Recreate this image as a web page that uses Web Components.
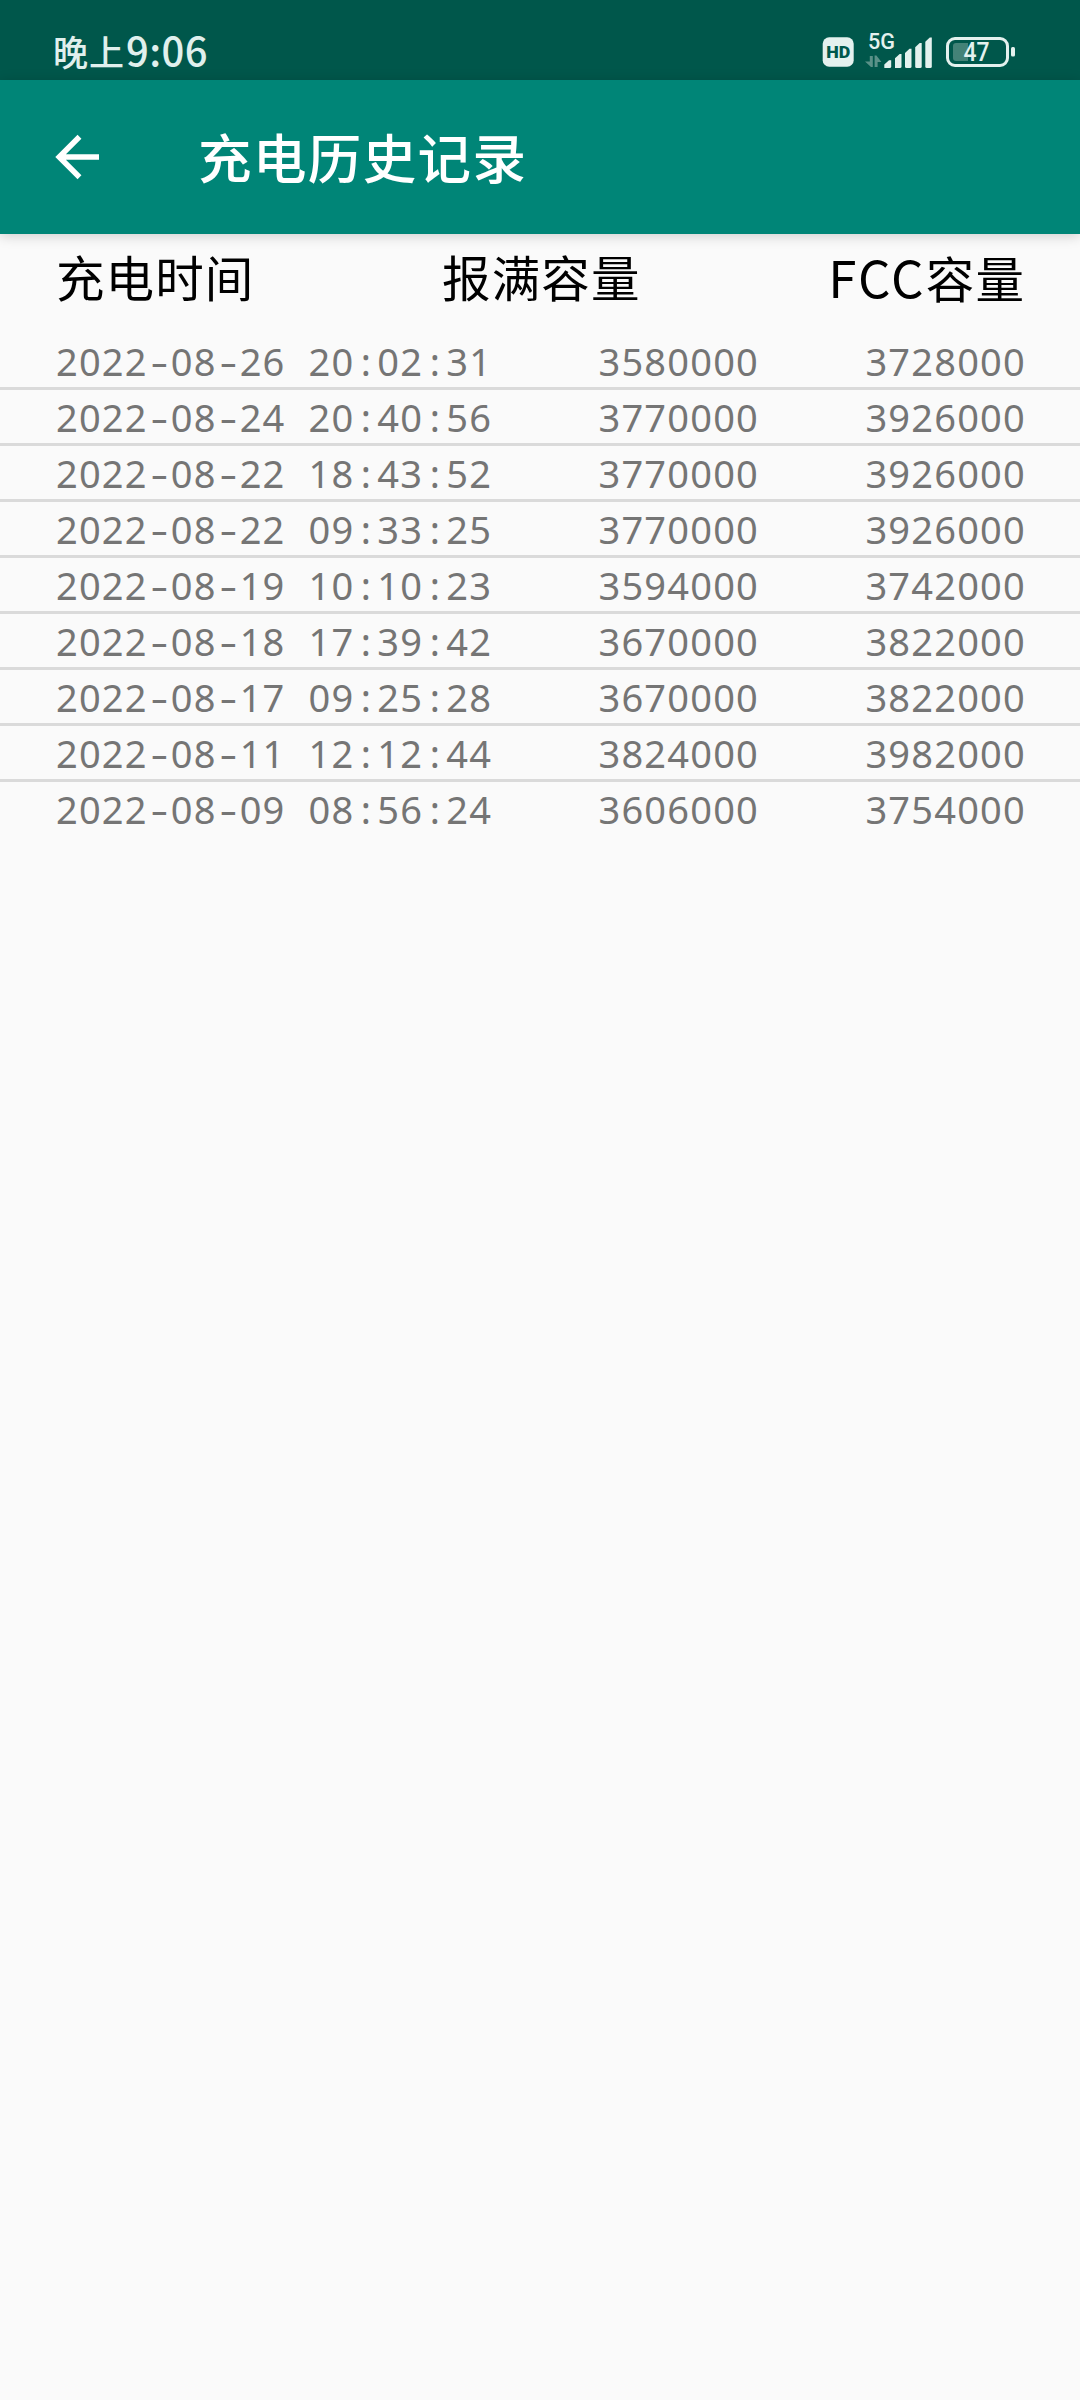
<!DOCTYPE html>
<html lang="zh-CN">
<head>
<meta charset="UTF-8">
<title>充电历史记录</title>
<style>
  body {
    margin: 0;
    min-height: 2400px;
    background: #fafafa;
    font-family: "Noto Sans CJK SC", sans-serif;
  }
  .latin {
    font-size: 51px;
    letter-spacing: 2.2px;
  }
</style>
</head>
<body>
<status-bar time="9:06"></status-bar>
<app-bar>充电历史记录</app-bar>
<charge-history>
  <span slot="time">充电时间</span>
  <span slot="full">报满容量</span>
  <span slot="fcc"><span class="latin">FCC</span>容量</span>
</charge-history>

<script>
  class StatusBar extends HTMLElement {
    constructor() {
      super();
      this.attachShadow({ mode: "open" });
    }
    connectedCallback() {
      this.shadowRoot.innerHTML = `
        <style>
          :host {
            display: flex;
            justify-content: space-between;
            height: 80px;
            padding: 0 40px 0 53px;
            background: #00574b;
            color: #e0f0ed;
          }
          .clock {
            display: flex;
            align-items: baseline;
            font-weight: 500;
            font-size: 35px;
            line-height: 99px;
            letter-spacing: 1px;
            white-space: nowrap;
          }
          .clock b {
            margin-left: 1px;
            font-weight: 500;
            font-size: 40px;
            letter-spacing: 0.4px;
          }
          svg { display: block; }
          text { font-family: Roboto, sans-serif; }
        </style>
        <div class="clock">晚上<b>${this.getAttribute("time")}</b></div>
        <svg width="240" height="80" viewBox="800 0 240 80" fill="#e4f1ee">
          <!-- hd badge -->
          <rect x="822.7" y="37.3" width="31" height="29.4" rx="6.5"/>
          <text x="838.2" y="58.2" font-size="17" font-weight="900" text-anchor="middle" textLength="24" lengthAdjust="spacingAndGlyphs" fill="#00574b">HD</text>
          <!-- network -->
          <text x="868" y="48.7" font-size="21.5" textLength="27" lengthAdjust="spacingAndGlyphs" font-weight="500">5G</text>
          <g fill="#5a9188">
            <path d="M869.8 56h3v11h-1.800L865 61.600h4.800z"/>
            <path d="M874.600 67h3v-5h3.800L876.400 55.600h-1.800z"/>
          </g>
          <path d="M884.3 68v-3.500l4.700-4.300h2.200V66.500q0 1.500-1.500 1.500z"/>
          <path d="M895 68V58.300l4.700-4.300h1.800V66.500q0 1.500-1.500 1.500z"/>
          <path d="M905 66.500V53l4.500-4.300h2V66.500q0 1.500-1.500 1.500h-3.500q-1.500 0-1.500-1.500z"/>
          <path d="M915.200 66.500V47.300l4.500-4.300h2V66.500q0 1.500-1.500 1.500h-3.500q-1.500 0-1.500-1.500z"/>
          <path d="M925.300 66.500V41.800l4.500-4.300h2V66.500q0 1.500-1.500 1.500h-3.500q-1.500 0-1.500-1.500z"/>
          <!-- battery -->
          <rect x="947.500" y="38.500" width="60" height="27" rx="7.500" fill="none" stroke="#e4f1ee" stroke-width="3"/>
          <path d="M956 43h12v18h-12a3 3 0 0 1-3-3V46a3 3 0 0 1 3-3z" fill="#438277"/>
          <rect x="1011" y="47" width="4" height="9.500" rx="1.500"/>
          <text x="976.500" y="61" font-size="25" font-weight="500" text-anchor="middle" textLength="26" lengthAdjust="spacingAndGlyphs">47</text>
        </svg>
      `;
    }
  }
  customElements.define("status-bar", StatusBar);

  class AppBar extends HTMLElement {
    constructor() {
      super();
      this.attachShadow({ mode: "open" });
    }
    connectedCallback() {
      this.shadowRoot.innerHTML = `
        <style>
          :host {
            display: flex;
            align-items: center;
            gap: 93px;
            height: 154px;
            padding-left: 49px;
            box-sizing: border-box;
            background: #008577;
            color: #fff;
            box-shadow: 0 2px 12px rgba(0, 0, 0, 0.18);
          }
          svg { display: block; margin-left: -5px; }
          h1 {
            margin: 0 0 3px;
            font-size: 53.500px;
            font-weight: 500;
            line-height: 80px;
            letter-spacing: 1.4px;
          }
        </style>
        <svg width="61" height="66" viewBox="0 0 61 66" fill="none" stroke="#fff" stroke-width="5.500">
          <path d="M55 33H15M35.500 12.800L15.200 33l20.300 20.200"/>
        </svg>
        <h1><slot></slot></h1>
      `;
    }
  }
  customElements.define("app-bar", AppBar);

  class ChargeRow extends HTMLElement {
    constructor() {
      super();
      this.attachShadow({ mode: "open" });
    }
    // the digits sit on a 23px grid, so narrow signs get a cell of their own
    mono(text) {
      return text
        .replace(/-/g, '<i class="dash">-</i>')
        .replace(/:/g, '<i>:</i>');
    }
    connectedCallback() {
      this.shadowRoot.innerHTML = `
        <style>
          :host {
            display: flex;
            justify-content: space-between;
            height: 53px;
            padding: 0 54px 0 56px;
            border-bottom: 3px solid #dadada;
            color: #757575;
            font-family: "Noto Sans", sans-serif;
            font-size: 38px;
            line-height: 55px;
            letter-spacing: 1.2px;
            white-space: pre;
          }
          :host(:last-of-type) { border-bottom: 0; }
          i {
            display: inline-block;
            width: 23px;
            font-style: normal;
            letter-spacing: 0;
            text-align: center;
          }
          .dash { transform: scaleX(1.45); }
          .date { word-spacing: 11.900px; }
        </style>
        <span class="date">${this.mono(this.getAttribute("date"))}</span>
        <span>${this.getAttribute("full")}</span>
        <span>${this.getAttribute("fcc")}</span>
      `;
    }
  }
  customElements.define("charge-row", ChargeRow);

  class ChargeHistory extends HTMLElement {
    constructor() {
      super();
      this.attachShadow({ mode: "open" });
      this.records = [
        ["2022-08-26 20:02:31", 3580000, 3728000],
        ["2022-08-24 20:40:56", 3770000, 3926000],
        ["2022-08-22 18:43:52", 3770000, 3926000],
        ["2022-08-22 09:33:25", 3770000, 3926000],
        ["2022-08-19 10:10:23", 3594000, 3742000],
        ["2022-08-18 17:39:42", 3670000, 3822000],
        ["2022-08-17 09:25:28", 3670000, 3822000],
        ["2022-08-11 12:12:44", 3824000, 3982000],
        ["2022-08-09 08:56:24", 3606000, 3754000]
      ];
    }
    connectedCallback() {
      this.shadowRoot.innerHTML = `
        <style>
          :host { display: block; }
          header {
            display: flex;
            justify-content: space-between;
            height: 100px;
            padding: 0 55px 0 56px;
            color: #000;
            font-size: 48.500px;
            line-height: 84px;
            letter-spacing: 1.1px;
            white-space: nowrap;
          }
        </style>
        <header>
          <slot name="time"></slot>
          <slot name="full"></slot>
          <slot name="fcc"></slot>
        </header>
        ${this.records.map(([date, full, fcc]) => `<charge-row date="${date}" full="${full}" fcc="${fcc}"></charge-row>`).join("")}
      `;
    }
  }
  customElements.define("charge-history", ChargeHistory);
</script>
</body>
</html>
